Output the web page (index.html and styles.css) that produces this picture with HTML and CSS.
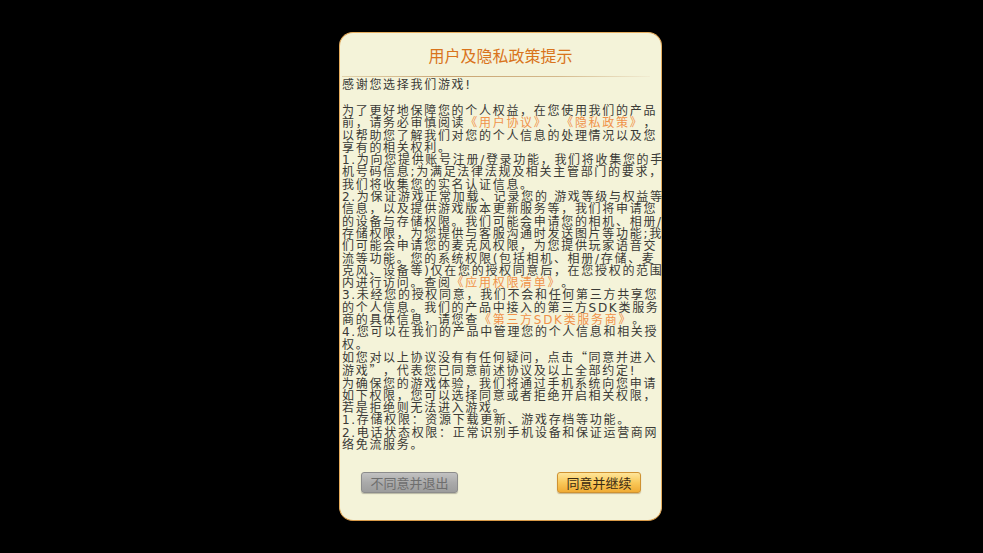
FILE: index.html
```html
<!DOCTYPE html>
<html lang="zh-CN">
<head>
<meta charset="utf-8">
<title>用户及隐私政策提示</title>
<link rel="stylesheet" href="styles.css">
</head>
<body>
<div class="stage">
  <div class="panel">
    <div class="title">用户及隐私政策提示</div>
    <div class="divider"></div>
    <div class="content">
      <p class="intro">感谢您选择我们游戏!</p>
      <p class="body">为了更好地保障您的个人权益，在您使用我们的产品<br>前，请务必审慎阅读<span class="link">《用户协议》</span>、<span class="link">《隐私政策》</span>，<br>以帮助您了解我们对您的个人信息的处理情况以及您<br>享有的相关权利。<br>1.为向您提供账号注册/登录功能，我们将收集您的手<br>机号码信息;为满足法律法规及相关主管部门的要求，<br>我们将收集您的实名认证信息。<br>2.为保证游戏正常加载、记录您的 游戏等级与权益等<br>信息，以及提供游戏版本更新服务等，我们将申请您<br>的设备与存储权限。我们可能会申请您的相机、相册/<br>存储权限，为您提供与客服沟通时发送图片等功能;我<br>们可能会申请您的麦克风权限，为您提供玩家语音交<br>流等功能。您的系统权限(包括相机、相册/存储、麦<br>克风、设备等)仅在您的授权同意后，在您授权的范围<br>内进行访问。查阅<span class="link">《应用权限清单》</span>。<br>3.未经您的授权同意，我们不会和任何第三方共享您<br>的个人信息。我们的产品中接入的第三方SDK类服务<br>商的具体信息，请您查<span class="link">《第三方SDK类服务商》</span>。<br>4.您可以在我们的产品中管理您的个人信息和相关授<br>权。<br>如您对以上协议没有有任何疑问，点击<span class="cjk">“</span>同意并进入<br>游戏<span class="cjk">”</span>，代表您已同意前述协议及以上全部约定!<br>为确保您的游戏体验，我们将通过手机系统向您申请<br>如下权限，您可以选择同意或者拒绝开启相关权限，<br>若是拒绝则无法进入游戏。<br>1.存储权限：资源下载更新、游戏存档等功能。<br>2.电话状态权限：正常识别手机设备和保证运营商网<br>络免流服务。</p>
    </div>
    <div class="actions">
      <button class="btn btn-decline">不同意并退出</button>
      <button class="btn btn-accept">同意并继续</button>
    </div>
  </div>
</div>
</body>
</html>
```

FILE: styles.css
```css
html, body {
  margin: 0;
  padding: 0;
  background: #000;
}
body {
  width: 983px;
  height: 553px;
  overflow: hidden;
  font-family: "DejaVu Sans", "Noto Sans CJK SC", sans-serif;
}
.stage {
  padding: 32px 0 0 339px;
}
.panel {
  box-sizing: border-box;
  width: 323px;
  height: 489px;
  background: #f4f3d9;
  border: 1px solid #e6ad5e;
  border-bottom-color: #d89a48;
  border-radius: 14px;
  display: flex;
  flex-direction: column;
  padding: 0 1px;
}
.title {
  padding-top: 12px;
  height: 20px;
  line-height: 20px;
  text-align: center;
  font-family: "Noto Sans CJK SC", sans-serif;
  font-size: 16px;
  color: #d9741c;
}
.divider {
  margin: 11px 10px 0 1px;
  height: 1px;
  background: linear-gradient(to right, #e2d3ac 0%, #c9a472 35%, #d4b98c 70%, #f1ecd2 100%);
}
.content {
  flex: 1;
  padding: 2px 0 0 1px;
  color: #3a3a36;
  font-size: 12px;
  line-height: 12.3px;
  letter-spacing: 1.7px;
  white-space: nowrap;
  text-spacing-trim: space-all;
}
.content p {
  margin: 0;
}
.intro {
  margin-bottom: 13.7px !important;
}
.link {
  color: #f0924a;
}
.cjk {
  font-family: "Noto Sans CJK SC", sans-serif;
}
.actions {
  display: flex;
  justify-content: space-between;
  padding: 0 19px 27px 20px;
}
.btn {
  box-sizing: border-box;
  height: 21px;
  padding: 0;
  border-radius: 3px;
  font-family: "Noto Sans CJK SC", sans-serif;
  font-size: 13px;
  line-height: 19px;
  cursor: pointer;
}
.btn-decline {
  width: 97px;
  color: #6e6e6e;
  border: 1px solid #8c8c8c;
  background: linear-gradient(to bottom, #c2c2c2 0%, #aaaaaa 50%, #9c9c9c 100%);
  box-shadow: 0 1px 1px rgba(0,0,0,0.25);
}
.btn-accept {
  width: 84px;
  color: #3a2a12;
  border: 1px solid #cf9232;
  background: linear-gradient(to bottom, #fee59a 0%, #f9c95a 50%, #f0ab34 100%);
  box-shadow: 0 1px 1px rgba(120,70,0,0.35);
}
```
